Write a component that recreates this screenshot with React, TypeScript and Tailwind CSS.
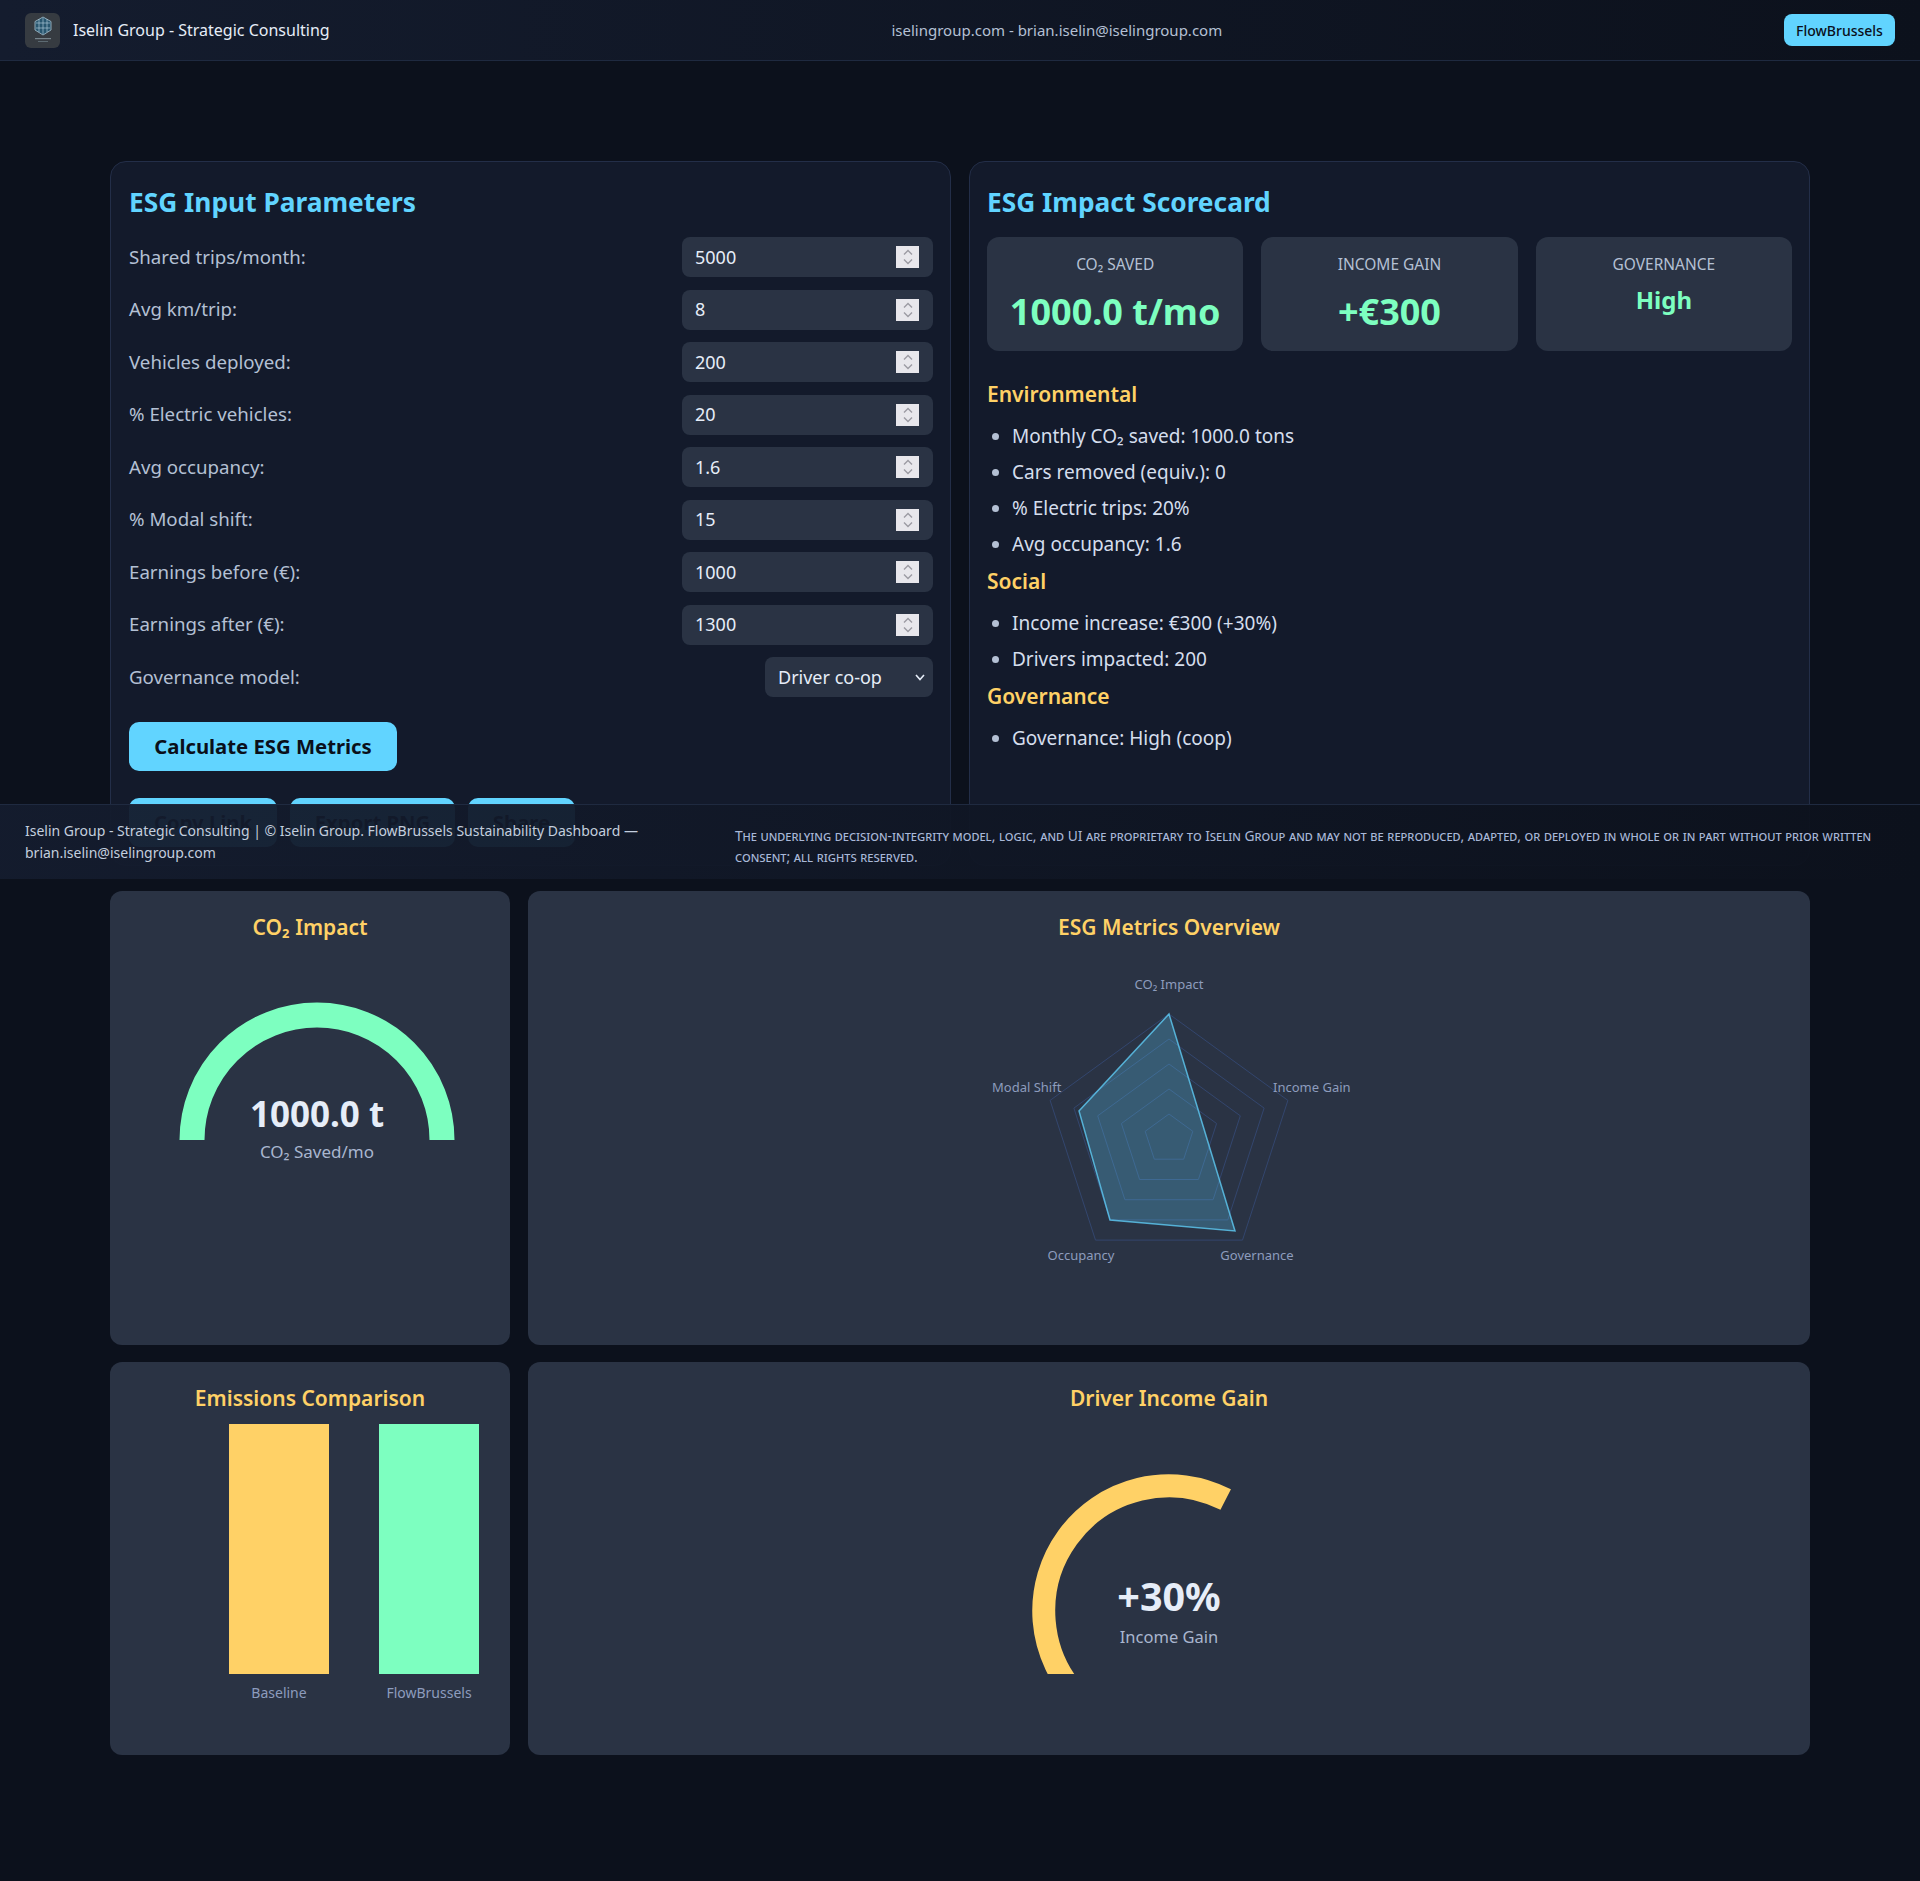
import React from "react";

const font = { fontFamily: '"Noto Sans", "Liberation Sans", sans-serif' };

const inputs = [
  ["Shared trips/month:", "5000"],
  ["Avg km/trip:", "8"],
  ["Vehicles deployed:", "200"],
  ["% Electric vehicles:", "20"],
  ["Avg occupancy:", "1.6"],
  ["% Modal shift:", "15"],
  ["Earnings before (€):", "1000"],
  ["Earnings after (€):", "1300"],
];

function Spinner() {
  return (
    <div className="w-[23px] h-[22px] bg-[#e8e7ec] flex items-center justify-center">
      <svg width="12" height="18" viewBox="0 0 12 18" fill="none" stroke="#9c9ba3" strokeWidth="1.4">
        <path d="M2 6.5 L6 2.5 L10 6.5" />
        <path d="M2 11.5 L6 15.5 L10 11.5" />
      </svg>
    </div>
  );
}

function Row({ label, value }: { label: string; value: string }) {
  return (
    <div className="flex items-center justify-between h-10 mb-[12.5px]">
      <span className="text-[18.7px] text-[#b4c0d4]">{label}</span>
      <div className="w-[251px] h-10 rounded-lg bg-[#2a3344] flex items-center justify-between pl-[13px] pr-[14px] text-[18px] text-[#e6edf8]">
        <span>{value}</span>
        <Spinner />
      </div>
    </div>
  );
}

function Btn({ children, w }: { children: React.ReactNode; w: string }) {
  return (
    <div className={`${w} h-[49px] rounded-[10px] bg-[#61d4ff] flex items-center justify-center text-[20.3px] font-bold text-[#0a0f1a]`}>
      {children}
    </div>
  );
}

function Stat({ label, value, big }: { label: string; value: string; big?: boolean }) {
  return (
    <div className="h-[114px] rounded-xl bg-[#2a3344] flex flex-col items-center pt-[16px]">
      <div className="text-[15.5px] leading-[22px] text-[#b4c0d4]">{label}</div>
      <div className={big ? "text-[36px] leading-[50px] mt-[12px] font-bold text-[#7dffc0]" : "text-[24px] leading-[34px] mt-[8px] font-bold text-[#7dffc0]"}>{value}</div>
    </div>
  );
}

function Bullets({ items }: { items: string[] }) {
  return (
    <ul className="list-disc pl-[25px] text-[19px] text-[#d5deed] marker:text-[#b4c0d4]">
      {items.map((t) => (
        <li key={t} className="h-9 leading-9">{t}</li>
      ))}
    </ul>
  );
}

function Title({ children }: { children: React.ReactNode }) {
  return <h3 className="text-center text-[21px] leading-[36px] font-semibold text-[#ffd166]">{children}</h3>;
}

function Logo() {
  return (
    <div className="w-[35px] h-[35px] rounded-md bg-[#363b41] flex items-center justify-center">
      <svg width="24" height="30" viewBox="0 0 24 30">
        <path d="M12 2 L20 6.5 V15 L12 20 L4 15 V6.5 Z" fill="#28566f" stroke="#8fa9b8" strokeWidth="1" />
        <path d="M12 3 V19 M5 8 H19 M5 13 H19 M8 4 V17 M16 4 V17" stroke="#b9d4e3" strokeWidth="0.6" />
        <rect x="4" y="23" width="16" height="1.2" fill="#77848c" />
        <rect x="7" y="26" width="10" height="1" fill="#5c6a72" />
      </svg>
    </div>
  );
}

function CO2Gauge() {
  return (
    <svg width="340" height="190" viewBox="0 0 340 190" className="block ml-[37px] mt-[45px]">
      <path d="M 45 150 A 125 125 0 0 1 295 150" fill="none" stroke="#7dffc0" strokeWidth="25" />
      <text x="170" y="137" textAnchor="middle" fontSize="35" fontWeight="700" fill="#e6edf8">1000.0 t</text>
      <text x="170" y="168" textAnchor="middle" fontSize="17" fill="#a9b6cf">CO₂ Saved/mo</text>
    </svg>
  );
}

function pent(r: number) {
  const cx = 200, cy = 179;
  return [0, 1, 2, 3, 4]
    .map((i) => {
      const a = (i * 72 * Math.PI) / 180;
      return `${(cx + r * Math.sin(a)).toFixed(1)},${(cy - r * Math.cos(a)).toFixed(1)}`;
    })
    .join(" ");
}

function Radar() {
  return (
    <svg width="400" height="320" viewBox="0 0 400 320" className="block mx-auto mt-[15px]">
      {[25, 50, 75, 100, 125].map((r) => (
        <polygon key={r} points={pent(r)} fill="none" stroke="#33466e" strokeWidth="1" />
      ))}
      <polygon points="200,54 266,271 141,260 110,151" fill="#61d4ff" fillOpacity="0.25" stroke="#61d4ff" strokeOpacity="0.75" strokeWidth="1.5" />
      <g fontSize="13" fill="#8d9cbd">
        <text x="200" y="29" textAnchor="middle">CO₂ Impact</text>
        <text x="304" y="132">Income Gain</text>
        <text x="23" y="132">Modal Shift</text>
        <text x="112" y="300" textAnchor="middle">Occupancy</text>
        <text x="288" y="300" textAnchor="middle">Governance</text>
      </g>
    </svg>
  );
}

function Bars() {
  return (
    <svg width="364" height="300" viewBox="0 0 364 300" className="block">
      <rect x="101" y="0" width="100" height="250" fill="#ffd166" />
      <rect x="251" y="0" width="100" height="250" fill="#7dffc0" />
      <g fontSize="14" fill="#8d9cbd" textAnchor="middle">
        <text x="151" y="274">Baseline</text>
        <text x="301" y="274">FlowBrussels</text>
      </g>
    </svg>
  );
}

function IncomeGauge() {
  return (
    <svg width="320" height="215" viewBox="0 0 320 215" className="block mx-auto mt-[43px]">
      <path d="M 71.6 240.5 A 125 125 0 0 1 216.7 40.6" fill="none" stroke="#ffd166" strokeWidth="23" />
      <text x="160" y="152" textAnchor="middle" fontSize="39.5" fontWeight="700" fill="#e6edf8">+30%</text>
      <text x="160" y="184" textAnchor="middle" fontSize="16.5" fill="#a9b6cf">Income Gain</text>
    </svg>
  );
}

export default function App() {
  return (
    <div style={font} className="relative h-[1881px] bg-[#0c111c] overflow-hidden">
      <header className="h-[61px] border-b border-[#1f2a40] bg-gradient-to-r from-[#141c2e] to-[#0c111c] flex items-center justify-between pl-[25px] pr-[25px]">
        <div className="flex items-center gap-[13px]">
          <Logo />
          <span className="text-[16px] text-[#e6edf8]">Iselin Group - Strategic Consulting</span>
        </div>
        <div className="text-[15px] mt-[1px] text-[#b4c0d4]">iselingroup.com - brian.iselin@iselingroup.com</div>
        <div className="w-[111px] h-8 rounded-lg bg-[#61d4ff] flex items-center justify-center text-[14px] font-medium text-[#0a0f1a]">FlowBrussels</div>
      </header>

      <main className="px-[110px] pt-[100px]">
        <div className="grid grid-cols-2 gap-[18px] items-start">
          <section className="rounded-2xl border border-[#232e48] bg-[#131a2b] pl-[18px] pr-[17px] pt-[22px] h-[705px]">
            <h2 className="text-[26.3px] leading-[36px] font-bold text-[#61d4ff] mb-[17px]">ESG Input Parameters</h2>
            {inputs.map(([l, v]) => (
              <Row key={l} label={l} value={v} />
            ))}
            <div className="flex items-center justify-between h-10">
              <span className="text-[18.7px] text-[#b4c0d4]">Governance model:</span>
              <div className="w-[168px] h-10 rounded-lg bg-[#2a3344] flex items-center justify-between pl-[13px] pr-[7px] text-[18px] text-[#e6edf8]">
                <span>Driver co-op</span>
                <svg width="12" height="12" viewBox="0 0 12 12" fill="none" stroke="#e6edf8" strokeWidth="1.6">
                  <path d="M2 4 L6 8.5 L10 4" />
                </svg>
              </div>
            </div>
            <div className="mt-[25px]"><Btn w="w-[268px]">Calculate ESG Metrics</Btn></div>
            <div className="flex gap-[13px] mt-[27px]">
              <Btn w="w-[148px]">Copy Link</Btn>
              <Btn w="w-[165px]">Export PNG</Btn>
              <Btn w="w-[107px]">Share</Btn>
            </div>
          </section>

          <section className="rounded-2xl border border-[#232e48] bg-[#131a2b] px-[17px] pt-[22px] h-[705px]">
            <h2 className="text-[26.3px] leading-[36px] font-bold text-[#61d4ff] mb-[17px]">ESG Impact Scorecard</h2>
            <div className="grid grid-cols-3 gap-[18px]">
              <Stat label="CO₂ SAVED" value="1000.0 t/mo" big />
              <Stat label="INCOME GAIN" value="+€300" big />
              <Stat label="GOVERNANCE" value="High" />
            </div>
            <h4 className="text-[21px] leading-[28px] font-semibold text-[#ffd166] mt-[29px] mb-[10px]">Environmental</h4>
            <Bullets items={["Monthly CO₂ saved: 1000.0 tons", "Cars removed (equiv.): 0", "% Electric trips: 20%", "Avg occupancy: 1.6"]} />
            <h4 className="text-[21px] leading-[28px] font-semibold text-[#ffd166] mt-[5px] mb-[10px]">Social</h4>
            <Bullets items={["Income increase: €300 (+30%)", "Drivers impacted: 200"]} />
            <h4 className="text-[21px] leading-[28px] font-semibold text-[#ffd166] mt-[5px] mb-[10px]">Governance</h4>
            <Bullets items={["Governance: High (coop)"]} />
          </section>
        </div>

        <div className="grid grid-cols-[400px_1fr] grid-rows-[454px_393px] gap-x-[18px] gap-y-[17px] mt-[25px]">
          <section className="rounded-xl bg-[#2a3344] pt-[18px]">
            <Title>CO₂ Impact</Title>
            <CO2Gauge />
          </section>
          <section className="rounded-xl bg-[#2a3344] pt-[18px]">
            <Title>ESG Metrics Overview</Title>
            <Radar />
          </section>
          <section className="rounded-xl bg-[#2a3344] pt-[18px] px-[18px]">
            <Title>Emissions Comparison</Title>
            <div className="mt-[8px]"><Bars /></div>
          </section>
          <section className="rounded-xl bg-[#2a3344] pt-[18px]">
            <Title>Driver Income Gain</Title>
            <IncomeGauge />
          </section>
        </div>
      </main>

      <footer className="absolute left-0 right-0 top-[804px] h-[75px] border-t border-[#1f2a40] bg-gradient-to-r from-[#141c2e]/95 to-[#0c111c]/95 flex pl-[25px] pr-[25px]">
        <div className="w-[640px] pt-[15px] text-[14px] leading-[22px] text-[#c3cede]">
          Iselin Group - Strategic Consulting | © Iselin Group. FlowBrussels Sustainability Dashboard — brian.iselin@iselingroup.com
        </div>
        <div className="ml-[70px] flex-1 pt-[20px] text-[13.8px] leading-[21px] text-[#a9b8d8] [font-variant-caps:small-caps]">
          The underlying decision-integrity model, logic, and UI are proprietary to Iselin Group and may not be reproduced, adapted, or deployed in whole or in part without prior written consent; all rights reserved.
        </div>
      </footer>
    </div>
  );
}
